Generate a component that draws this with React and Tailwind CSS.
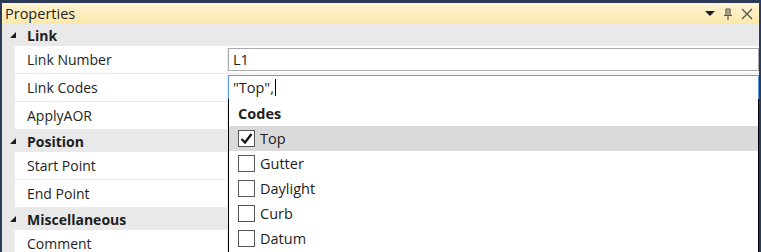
import React from "react";

const F = { fontFamily: '"Open Sans", "Noto Sans", sans-serif' };

function Tri() {
  return (
    <svg width="8" height="8" viewBox="0 0 8 8" className="shrink-0">
      <polygon points="7,1 7,7 1,7" fill="#1e1e1e" />
    </svg>
  );
}

function Cat({ label }) {
  return (
    <div className="h-[22px] flex items-center bg-[#e9e9e9] pl-[7px]">
      <Tri />
      <span className="ml-[10px] font-bold text-[#1e1e1e] text-[14px]">{label}</span>
    </div>
  );
}

function Prop({ label, children }) {
  return (
    <div className="h-[28px] flex bg-[#e9e9e9]">
      <div className="w-[13px] shrink-0" />
      <div className="w-[212px] shrink-0 bg-white border-b border-[#ececec] flex items-center pl-[12px] text-[14px] text-[#1e1e1e]">
        {label}
      </div>
      <div className="w-[1px] bg-[#ececec]" />
      <div className="flex-1 bg-white border-b border-[#ececec] flex items-center">{children}</div>
    </div>
  );
}

function Check({ checked }) {
  return (
    <div className="w-[17px] h-[17px] border border-[#555] bg-white flex items-center justify-center">
      {checked && (
        <svg width="13" height="13" viewBox="0 0 13 13">
          <path d="M1.5 7 L5 10.5 L11.5 2" stroke="#111" strokeWidth="2.2" fill="none" />
        </svg>
      )}
    </div>
  );
}

function Item({ label, checked, hl }) {
  return (
    <div className={`h-[25px] flex items-center pl-[9px] gap-[5px] ${hl ? "bg-[#dadada]" : ""}`}>
      <Check checked={checked} />
      <span className="text-[14.5px] text-[#1e1e1e]">{label}</span>
    </div>
  );
}

export default function App() {
  return (
    <div style={F} className="w-[761px] h-[252px] bg-[#2b3b58] pt-[3px] pl-[2px] pr-[2px] overflow-hidden">
      <div className="h-[21px] bg-gradient-to-b from-[#fff5d6] to-[#fde7a8] flex items-center pl-[3px] pr-[6px]">
        <span className="text-[14.5px] text-[#1e1e1e]">Properties</span>
        <div className="ml-auto flex items-center gap-[8px]">
          <svg width="10" height="6" viewBox="0 0 10 6">
            <polygon points="0,0 10,0 5,5" fill="#1e1e1e" />
          </svg>
          <svg width="10" height="12" viewBox="0 0 10 12">
            <path d="M2.5 1 H7.5 M3 1 V7 M7 1 V7 M1 7.5 H9 M5 7.5 V12" stroke="#555" strokeWidth="1.2" fill="none" />
            <path d="M5 1.5 V7" stroke="#555" strokeWidth="1" />
          </svg>
          <svg width="12" height="12" viewBox="0 0 12 12">
            <path d="M1 1 L11 11 M11 1 L1 11" stroke="#555" strokeWidth="1.4" />
          </svg>
        </div>
      </div>
      <div className="relative bg-white h-[228px]">
        <Cat label="Link" />
        <Prop label="Link Number">
          <div className="h-[23px] w-full border border-[#a9a9a9] flex items-center pl-[4px] text-[14.5px] text-[#1e1e1e]">L1</div>
        </Prop>
        <Prop label="Link Codes">
          <div className="h-[26px] w-full border border-[#5b9be6] flex items-center pl-[4px] text-[14.5px] text-[#1e1e1e]">
            "Top",<span className="inline-block w-[1px] h-[17px] bg-black ml-[1px]" />
          </div>
        </Prop>
        <Prop label="ApplyAOR" />
        <Cat label="Position" />
        <Prop label="Start Point" />
        <Prop label="End Point" />
        <Cat label="Miscellaneous" />
        <Prop label="Comment" />
        <div className="absolute left-[226px] top-[75px] right-0 bottom-0 bg-white border-l border-r border-black">
          <div className="h-[27px] flex items-end pl-[9px] pb-[1px] font-bold text-[14.5px] text-[#1e1e1e]">Codes</div>
          <Item label="Top" checked hl />
          <Item label="Gutter" />
          <Item label="Daylight" />
          <Item label="Curb" />
          <Item label="Datum" />
        </div>
      </div>
    </div>
  );
}
